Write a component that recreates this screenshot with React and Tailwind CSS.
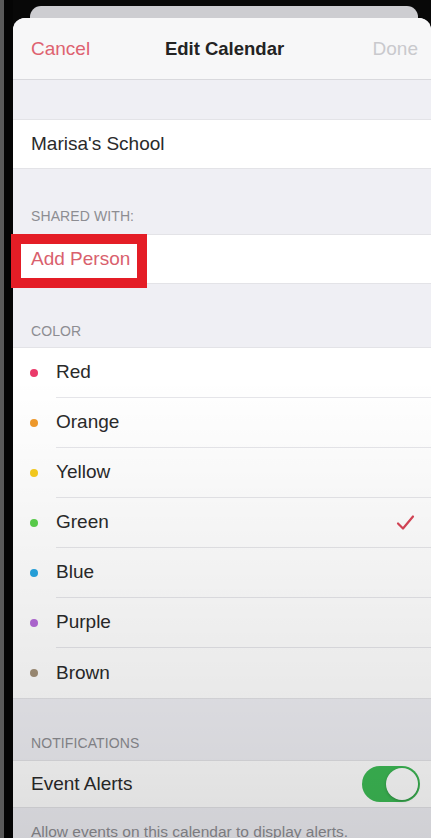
import React from 'react';

const colors = [
  { name: 'Red', dot: 'bg-[#ea3a6a]' },
  { name: 'Orange', dot: 'bg-[#f09a2c]' },
  { name: 'Yellow', dot: 'bg-[#f7cc1e]' },
  { name: 'Green', dot: 'bg-[#5bd14c]', checked: true },
  { name: 'Blue', dot: 'bg-[#27a6e2]' },
  { name: 'Purple', dot: 'bg-[#b56ad9]' },
  { name: 'Brown', dot: 'bg-[#a39179]' },
];

function SectionHeader({ label, height, pb }) {
  return (
    <div className={`flex items-end px-[18px] ${height} ${pb}`}>
      <span className="text-[14px] leading-[16px] text-[#8d8d92] tracking-[0.1px]">{label}</span>
    </div>
  );
}

function Check() {
  return (
    <svg width="19" height="17" viewBox="0 0 19 17" fill="none">
      <path d="M2 9.5 L7 14.5 L17 2.5" stroke="#d84556" strokeWidth="2.2" strokeLinecap="round" strokeLinejoin="round" />
    </svg>
  );
}

export default function App() {
  return (
    <div className="w-[431px] h-[838px] overflow-hidden bg-[#080808] flex font-['Liberation_Sans',Arial,sans-serif]">
      {/* phone bezel */}
      <div className="w-[4px] shrink-0 bg-[#5a5a5a]" />
      <div className="w-[9px] shrink-0 bg-[#050505]" />

      <div className="flex-1 pt-[6px]">
        {/* stacked card behind */}
        <div className="ml-[17px] mr-[13px] h-[12px] rounded-t-[11px] bg-[#cdcdd1]" />

        {/* sheet */}
        <div className="relative h-[820px] flex flex-col rounded-t-[12px] bg-[#efeff4]">
          {/* nav bar */}
          <div className="shrink-0 h-[62px] rounded-t-[12px] bg-[#f7f7f8] border-b border-[#d9d9dd] grid grid-cols-[1fr_auto_1fr] items-center pl-[18px] pr-[13px] pt-[1px]">
            <span className="text-[19px] text-[#de6270]">Cancel</span>
            <span className="text-[18.5px] font-bold text-[#232323]">Edit Calendar</span>
            <span className="text-[19px] text-[#c9c9cd] justify-self-end">Done</span>
          </div>

          <div className="shrink-0 h-[39px]" />

          <div className="shrink-0 h-[50px] bg-white border-y border-[#e3e3e7] flex items-center px-[18px]">
            <span className="text-[19px] text-[#2a2a2a]">Marisa's School</span>
          </div>

          <SectionHeader label="SHARED WITH:" height="shrink-0 h-[65px]" pb="pb-[10px]" />

          <div className="shrink-0 relative h-[50px] bg-white border-y border-[#e3e3e7] flex items-center px-[18px]">
            <span className="text-[19px] text-[#d9606d]">Add Person</span>
            {/* annotation box */}
            <div className="absolute left-[-2px] top-[-1px] w-[136px] h-[54px] border-[10px] border-[#e41d26]" />
          </div>

          <SectionHeader label="COLOR" height="shrink-0 h-[63px]" pb="pb-[8px]" />

          <div className="shrink-0 bg-white border-y border-[#e3e3e7]">
            {colors.map((c, i) => (
              <div key={c.name} className="h-[50px] flex items-stretch">
                <div className="w-[43px] pl-[17px] flex items-center">
                  <span className={`w-[8px] h-[8px] rounded-full ${c.dot}`} />
                </div>
                <div
                  className={`flex-1 flex items-center justify-between pr-[16px] ${
                    i < colors.length - 1 ? 'border-b border-[#e6e6ea]' : ''
                  }`}
                >
                  <span className="text-[19px] text-[#2a2a2a]">{c.name}</span>
                  {c.checked && <Check />}
                </div>
              </div>
            ))}
          </div>

          <SectionHeader label="NOTIFICATIONS" height="shrink-0 h-[61px]" pb="pb-[9px]" />

          <div className="shrink-0 h-[48px] bg-white border-y border-[#e3e3e7] flex items-center justify-between pl-[18px] pr-[11px]">
            <span className="text-[19px] text-[#2a2a2a]">Event Alerts</span>
            <div className="w-[58px] h-[36px] rounded-full bg-[#3dbb55] p-[2px] flex justify-end">
              <div className="w-[32px] h-[32px] rounded-full bg-white shadow-[0_1px_3px_rgba(0,0,0,0.25)]" />
            </div>
          </div>

          <div className="shrink-0 px-[18px] pt-[12px]">
            <span className="text-[15.5px] leading-[18px] text-[#8d8d92] whitespace-nowrap">Allow events on this calendar to display alerts.</span>
          </div>

          {/* video dimming toward the bottom */}
          <div className="pointer-events-none absolute inset-0 bg-[linear-gradient(to_bottom,transparent_44%,rgba(0,0,0,0.1)_90%,rgba(0,0,0,0.13))]" />
        </div>
      </div>
    </div>
  );
}
